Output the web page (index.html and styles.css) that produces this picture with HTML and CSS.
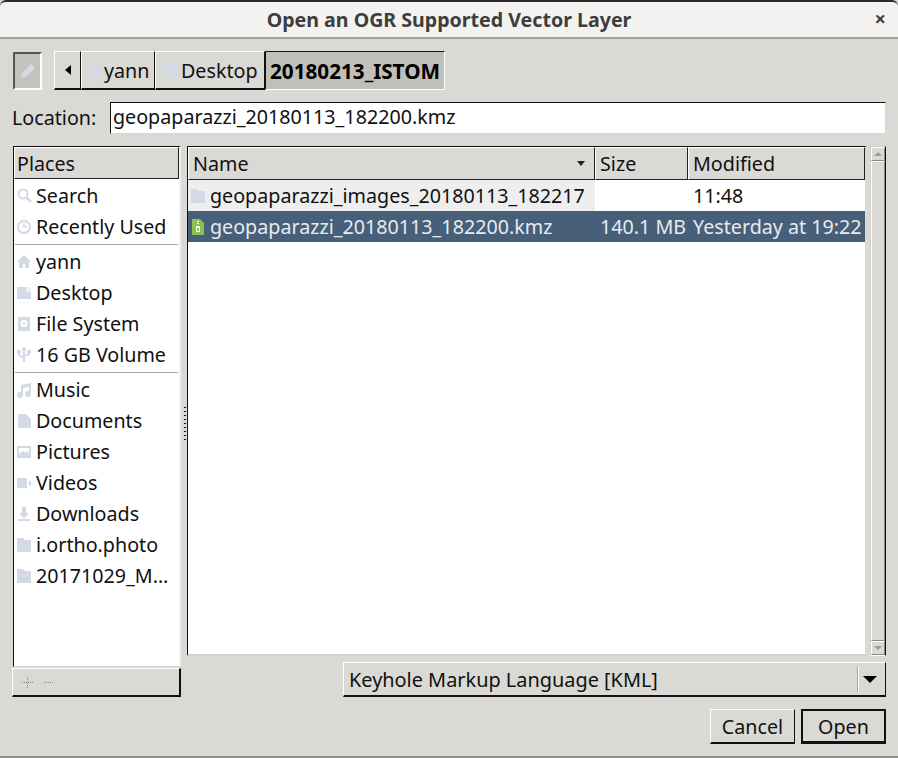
FILE: index.html
```html
<!DOCTYPE html>
<html lang="en">
<head>
<meta charset="UTF-8">
<title>Open an OGR Supported Vector Layer</title>
<link rel="stylesheet" href="styles.css">
</head>
<body>
<div class="dialog">
  <div class="titlebar">
    <span class="title">Open an OGR Supported Vector Layer</span>
    <span class="close">&#215;</span>
  </div>

  <div class="content">
    <div class="pathbar">
      <div class="edit-toggle">
        <svg width="18" height="18" viewBox="0 0 18 18"><path d="M2 16l1-5 9-9 4 4-9 9z" fill="#d3dae5"/></svg>
      </div>
      <div class="crumbs">
        <div class="crumb crumb-back"><span class="arrow-left"></span></div>
        <div class="crumb crumb-yann">
          <svg class="icon" width="14" height="14" viewBox="0 0 14 14"><path d="M7 1L0 8h2v5h4V9h2v4h4V8h2z" fill="#d3dae5"/></svg>
          <span>yann</span>
        </div>
        <div class="crumb crumb-desktop">
          <svg class="icon" width="14" height="14" viewBox="0 0 14 14"><path d="M0 1h14v12H0z" fill="#d3dae5"/></svg>
          <span>Desktop</span>
        </div>
        <div class="crumb crumb-current">20180213_ISTOM</div>
      </div>
    </div>

    <div class="location">
      <label class="location-label">Location:</label>
      <div class="location-input">geopaparazzi_20180113_182200.kmz</div>
    </div>

    <div class="panes">
      <div class="places-col">
        <div class="places">
          <div class="header places-header">Places</div>
          <div class="place">
            <svg class="icon" width="16" height="16" viewBox="0 0 16 16"><circle cx="6" cy="6" r="4.500" fill="none" stroke="#d3dae5" stroke-width="2"/><path d="M9 9l5 5" stroke="#d3dae5" stroke-width="2.500"/></svg>
            <span>Search</span>
          </div>
          <div class="place">
            <svg class="icon" width="16" height="16" viewBox="0 0 16 16"><circle cx="7" cy="8" r="6" fill="none" stroke="#d3dae5" stroke-width="2"/><path d="M7 4v4h3" fill="none" stroke="#d3dae5" stroke-width="1.500"/></svg>
            <span>Recently Used</span>
          </div>
          <div class="place-sep"></div>
          <div class="place">
            <svg class="icon" width="16" height="16" viewBox="0 0 16 16"><path d="M7 1L0 8h2v6h4v-4h2v4h4V8h2z" fill="#d3dae5"/></svg>
            <span>yann</span>
          </div>
          <div class="place">
            <svg class="icon" width="16" height="16" viewBox="0 0 16 16"><path d="M0 2h14v12H0z" fill="#d3dae5"/><path d="M9 2h5v5H9z" fill="#eef0f4"/></svg>
            <span>Desktop</span>
          </div>
          <div class="place">
            <svg class="icon" width="16" height="16" viewBox="0 0 16 16"><path d="M1 1h12v14H1z" fill="#d3dae5"/><circle cx="7" cy="7.500" r="3.500" fill="#fff"/><circle cx="7" cy="7.500" r="1.200" fill="#d3dae5"/></svg>
            <span>File System</span>
          </div>
          <div class="place">
            <svg class="icon" width="16" height="16" viewBox="0 0 16 16"><path d="M7 1v14M7 11L2 8V5M7 9l5-2V5" fill="none" stroke="#d3dae5" stroke-width="2"/><path d="M0 3h4v3H0zM10 3h4v3h-4zM5 1l2-1 2 1v2H5z" fill="#d3dae5"/></svg>
            <span>16 GB Volume</span>
          </div>
          <div class="place-sep"></div>
          <div class="place">
            <svg class="icon" width="16" height="16" viewBox="0 0 16 16"><path d="M4 3l10-2v11h-2V5L6 6v8H4z" fill="#d3dae5"/><circle cx="3" cy="13" r="3" fill="#d3dae5"/><circle cx="11" cy="12" r="3" fill="#d3dae5"/></svg>
            <span>Music</span>
          </div>
          <div class="place">
            <svg class="icon" width="16" height="16" viewBox="0 0 16 16"><path d="M1 1h8l5 5v9H1z" fill="#d3dae5"/></svg>
            <span>Documents</span>
          </div>
          <div class="place">
            <svg class="icon" width="16" height="16" viewBox="0 0 16 16"><path d="M0 2h14v12H0z" fill="#d3dae5"/><path d="M2 4h10v6l-2-3-2 2-2-2-4 3z" fill="#fff"/></svg>
            <span>Pictures</span>
          </div>
          <div class="place">
            <svg class="icon" width="16" height="16" viewBox="0 0 16 16"><path d="M0 3h10v10H0z" fill="#d3dae5"/><path d="M11 8l3-3v7z" fill="#d3dae5"/></svg>
            <span>Videos</span>
          </div>
          <div class="place">
            <svg class="icon" width="16" height="16" viewBox="0 0 16 16"><path d="M5 1h4v6h3l-5 5-5-5h3zM1 13h12v2H1z" fill="#d3dae5"/></svg>
            <span>Downloads</span>
          </div>
          <div class="place">
            <svg class="icon" width="16" height="16" viewBox="0 0 16 16"><path d="M0 1h6l2 2h6v12H0z" fill="#d3dae5"/></svg>
            <span>i.ortho.photo</span>
          </div>
          <div class="place">
            <svg class="icon" width="16" height="16" viewBox="0 0 16 16"><path d="M0 1h6l2 2h6v12H0z" fill="#d3dae5"/></svg>
            <span>20171029_M&#8230;</span>
          </div>
        </div>
        <div class="places-tools">
          <span class="tool-plus"></span>
          <span class="tool-minus"></span>
        </div>
      </div>

      <div class="grip"></div>

      <div class="files-col">
        <div class="files-row">
          <div class="files">
            <div class="file-grid file-head">
              <div class="header name-head">Name<span class="sort-arrow"></span></div>
              <div class="header">Size</div>
              <div class="header">Modified</div>
            </div>
            <div class="file-grid file-row">
              <div class="cell cell-name sorted">
                <svg class="icon" width="16" height="16" viewBox="0 0 16 16"><path d="M0 1h6l2 2h6v12H0z" fill="#d3dae5"/></svg>
                <span>geopaparazzi_images_20180113_182217</span>
              </div>
              <div class="cell"></div>
              <div class="cell">11:48</div>
            </div>
            <div class="file-grid file-row selected">
              <div class="cell cell-name">
                <svg class="icon" width="16" height="16" viewBox="0 0 16 16"><path d="M1 0h8l4 4v12H1z" fill="#8cc152"/><path d="M5 7h4v6H5z" fill="#fff"/><path d="M6 9h2v3H6z" fill="#8cc152"/><path d="M6 2h2v1H6zM6 4h2v1H6z" fill="#fff"/></svg>
                <span>geopaparazzi_20180113_182200.kmz</span>
              </div>
              <div class="cell">140.1 MB</div>
              <div class="cell">Yesterday at 19:22</div>
            </div>
          </div>
          <div class="scrollbar">
            <div class="scroll-btn"><span class="mini-up"></span></div>
            <div class="scroll-thumb"></div>
            <div class="scroll-btn"><span class="mini-down"></span></div>
          </div>
        </div>
        <div class="filter">
          <div class="combo">
            <span class="combo-text">Keyhole Markup Language [KML]</span>
            <span class="combo-btn"><span class="arrow-down"></span></span>
          </div>
        </div>
      </div>
    </div>

    <div class="actions">
      <button class="btn">Cancel</button>
      <button class="btn btn-default">Open</button>
    </div>
  </div>
</div>
</body>
</html>
```

FILE: styles.css
```css
html, body {
  margin: 0;
  padding: 0;
}
body {
  width: 898px;
  height: 758px;
  overflow: hidden;
  background: #dad9d5;
  color: #111;
  font-family: "Noto Sans", "Open Sans", sans-serif;
  font-size: 19.7px;
}
.dialog {
  height: 756px;
  display: flex;
  flex-direction: column;
  border-bottom: 2px solid #8f8e8a;
}
.icon {
  flex: none;
}

/* title bar */
.titlebar {
  height: 35px;
  flex: none;
  border-top: 2px solid #2b2b2b;
  border-bottom: 2px solid #a3a29e;
  border-radius: 6px 6px 0 0;
  background: #f3f2f1;
  display: flex;
  align-items: center;
  justify-content: center;
  position: relative;
}
.title {
  font-size: 19.6px;
  font-weight: bold;
  color: #3d3d3d;
}
.close {
  position: absolute;
  right: 12px;
  top: 3px;
  font-size: 20px;
  font-weight: bold;
  color: #3d3d3d;
}

.content {
  flex: 1;
  display: flex;
  flex-direction: column;
  padding: 12px 12px 0 13px;
}

/* path bar */
.pathbar {
  display: flex;
  gap: 12px;
  height: 39px;
}
.edit-toggle {
  width: 25px;
  height: 34px;
  margin-top: 1px;
  background: #c4c2bc;
  border: 2px solid;
  border-color: #555 #fff #fff #555;
  display: flex;
  align-items: center;
  justify-content: center;
}
.crumbs {
  display: flex;
  height: 39px;
}
.crumb {
  box-sizing: border-box;
  height: 39px;
  display: flex;
  align-items: center;
  gap: 1px;
  padding-left: 7px;
  border: 1px solid;
  border-color: #fff #111 #111 #fff;
  border-width: 1px 1px 2px 1px;
}
.crumb-back {
  width: 27px;
  justify-content: center;
  padding: 0;
}
.crumb-yann {
  width: 74px;
}
.crumb-desktop {
  width: 110px;
  gap: 4px;
}
.crumb-current {
  width: 180px;
  font-size: 20.7px;
  font-weight: bold;
  padding-left: 4px;
  background: #c1bfb9;
  border-color: #111 #fff #fff #111;
  border-width: 1px;
  color: #000;
}
.arrow-left {
  width: 0;
  height: 0;
  border-top: 5px solid transparent;
  border-bottom: 5px solid transparent;
  border-right: 6px solid #000;
}

/* location */
.location {
  display: flex;
  align-items: center;
  height: 32px;
  margin-top: 12px;
  gap: 13px;
}
.location-label {
  width: 85px;
  margin-left: -1px;
  padding-bottom: 2px;
}
.location-input {
  flex: 1;
  box-sizing: border-box;
  height: 32px;
  line-height: 28px;
  padding-left: 2px;
  background: #fff;
  border: 1px solid;
  border-color: #111 #d8d7d3 #d8d7d3 #111;
}

/* panes */
.panes {
  display: flex;
  margin-top: 12px;
  height: 551px;
}
.places-col {
  width: 168px;
  flex: none;
  display: flex;
  flex-direction: column;
}
.places {
  box-sizing: border-box;
  height: 521px;
  border: 1px solid;
  border-width: 1px 2px 1px 1px;
  border-color: #111 #f0f0ee #d4d3cf #111;
  background: #fff;
  overflow: hidden;
}
.header {
  box-sizing: border-box;
  height: 32px;
  line-height: 32px;
  padding-left: 2px;
  background: #dad9d5;
  border: 1px solid;
  border-color: #fff #222 #222 #fff;
  color: #111;
}
.place {
  display: flex;
  align-items: center;
  gap: 3px;
  height: 31px;
  padding-left: 3px;
  white-space: nowrap;
}
.places-header + .place {
  margin-top: 1px;
}
.place-sep {
  height: 1px;
  margin: 2px 1px 1px 1px;
  background: #a9a7a2;
}
.places-tools {
  box-sizing: border-box;
  height: 29px;
  margin-top: 1px;
  width: 169px;
  margin-left: -1px;
  display: flex;
  align-items: center;
  gap: 11px;
  padding-left: 9px;
  border: 1px solid;
  border-width: 1px 2px 2px 1px;
  border-color: #fff #111 #111 #fff;
}
.tool-plus {
  width: 11px;
  height: 11px;
  background:
    repeating-linear-gradient(90deg, #8a8985 0 1px, transparent 1px 2px) center / 100% 1px no-repeat,
    repeating-linear-gradient(#8a8985 0 1px, transparent 1px 2px) center / 1px 100% no-repeat;
}
.tool-minus {
  width: 10px;
  height: 1px;
  background: repeating-linear-gradient(90deg, #8a8985 0 1px, transparent 1px 2px);
}

.grip {
  width: 6px;
  flex: none;
  position: relative;
}
.grip::after {
  content: "";
  position: absolute;
  left: 3px;
  top: 261px;
  width: 2px;
  height: 33px;
  background: repeating-linear-gradient(#111 0 1px, transparent 1px 4px);
}

.files-col {
  flex: 1;
  display: flex;
  flex-direction: column;
}
.files-row {
  display: flex;
  height: 510px;
  gap: 3px;
}
.files {
  box-sizing: border-box;
  width: 680px;
  border: 1px solid;
  border-width: 1px 2px 2px 1px;
  border-color: #111 #dad9d5 #d4d3cf #111;
  background: #fff;
  flex: none;
}
.file-grid {
  display: grid;
  grid-template-columns: 407px 93px 177px;
}
.file-head .header {
  height: 33px;
  line-height: 32px;
  padding-left: 4px;
  position: relative;
}
.sort-arrow {
  position: absolute;
  right: 9px;
  top: 13px;
  width: 0;
  height: 0;
  border-left: 4px solid transparent;
  border-right: 4px solid transparent;
  border-top: 5px solid #222;
}
.file-row {
  height: 31px;
}
.cell {
  line-height: 31px;
  padding-left: 5px;
  white-space: nowrap;
}
.cell-name {
  display: flex;
  align-items: center;
  gap: 3px;
  padding-left: 3px;
}
.sorted {
  background: #eeeeee;
}
.selected {
  background: #475f78;
  color: #e6ebf0;
}
.scrollbar {
  width: 16px;
  flex: none;
  display: flex;
  flex-direction: column;
  background: #c9c7c2;
  box-sizing: border-box;
  border: 1px solid;
  border-color: #cfcec9 #111 #fff #cfcec9;
}
.scroll-btn {
  box-sizing: border-box;
  height: 14px;
  flex: none;
  background: #dad9d5;
  border: 1px solid;
  border-color: #fff #888 #888 #fff;
  display: flex;
  align-items: center;
  justify-content: center;
}
.scroll-thumb {
  flex: 1;
  background: #dad9d5;
  border: 1px solid;
  border-color: #fff #888 #888 #fff;
}
.mini-up,
.mini-down {
  width: 0;
  height: 0;
  border-left: 4px solid transparent;
  border-right: 4px solid transparent;
}
.mini-up {
  border-bottom: 4px solid #9a9995;
}
.mini-down {
  border-top: 4px solid #9a9995;
}

/* filter */
.filter {
  display: flex;
  justify-content: flex-end;
  margin-top: 6px;
}
.combo {
  box-sizing: border-box;
  width: 543px;
  height: 35px;
  display: flex;
  align-items: center;
  justify-content: space-between;
  padding-left: 5px;
  border: 1px solid;
  border-width: 1px 1px 2px 1px;
  border-color: #fff #111 #111 #fff;
}
.combo-text {
  font-size: 19.9px;
}
.combo-btn {
  box-sizing: border-box;
  width: 28px;
  height: 26px;
  padding-right: 3px;
  border-left: 1px solid #a9a7a2;
  box-shadow: inset 1px 0 0 #fff;
  display: flex;
  align-items: center;
  justify-content: center;
}
.arrow-down {
  width: 0;
  height: 0;
  border-left: 7px solid transparent;
  border-right: 7px solid transparent;
  border-top: 7px solid #000;
}

/* buttons */
.actions {
  display: flex;
  justify-content: flex-end;
  gap: 6px;
  margin-top: 12px;
}
.btn {
  box-sizing: border-box;
  width: 85px;
  height: 35px;
  padding: 0;
  font: inherit;
  color: #111;
  background: #dad9d5;
  border: 1px solid;
  border-width: 1px 1px 2px 1px;
  border-color: #fff #111 #111 #fff;
}
.btn-default {
  border: 2px solid #111;
  border-bottom-width: 3px;
}
```
